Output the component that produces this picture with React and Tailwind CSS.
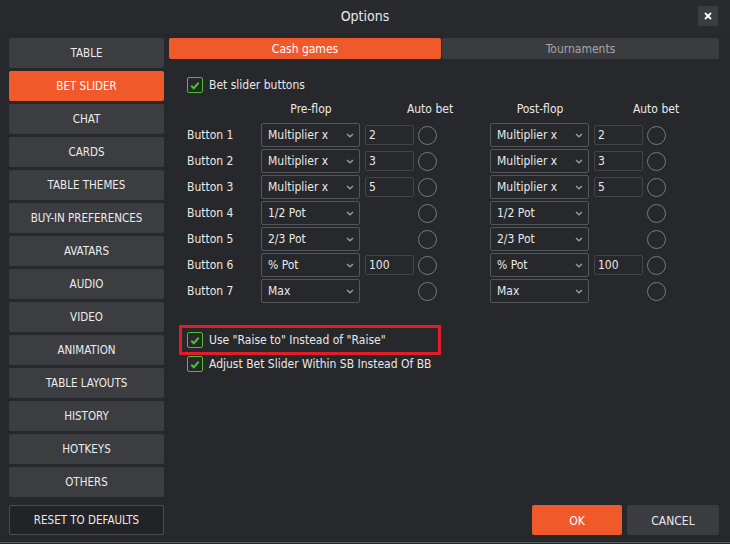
import { useState } from "react";

const MENU = [
  "TABLE",
  "BET SLIDER",
  "CHAT",
  "CARDS",
  "TABLE THEMES",
  "BUY-IN PREFERENCES",
  "AVATARS",
  "AUDIO",
  "VIDEO",
  "ANIMATION",
  "TABLE LAYOUTS",
  "HISTORY",
  "HOTKEYS",
  "OTHERS",
];

const ROWS = [
  { label: "Button 1", type: "Multiplier x", value: "2" },
  { label: "Button 2", type: "Multiplier x", value: "3" },
  { label: "Button 3", type: "Multiplier x", value: "5" },
  { label: "Button 4", type: "1/2 Pot" },
  { label: "Button 5", type: "2/3 Pot" },
  { label: "Button 6", type: "% Pot", value: "100" },
  { label: "Button 7", type: "Max" },
];

function Check() {
  return (
    <span className="w-[16px] h-[16px] rounded-[2px] border border-[#4cbb2c] flex items-center justify-center shrink-0">
      <svg width="10" height="9" viewBox="0 0 10 9">
        <path d="M1.3 4.8 L3.8 7.2 L8.7 1.6" fill="none" stroke="#4cc42c" strokeWidth="2" />
      </svg>
    </span>
  );
}

function Select({ text }) {
  return (
    <div className="w-[99px] h-[24px] rounded-[2px] border border-[#55565a] flex items-center justify-between pl-[6px] pr-[5px] shrink-0">
      <span>{text}</span>
      <svg width="8" height="5" viewBox="0 0 8 5">
        <path d="M1 1 L4 3.8 L7 1" fill="none" stroke="#9a9b9e" strokeWidth="1.4" />
      </svg>
    </div>
  );
}

function Group({ row }) {
  return (
    <div className="flex items-center shrink-0">
      <Select text={row.type} />
      <div className="w-[54px] pl-[5px]">
        {row.value && (
          <div className="w-[49px] h-[20px] rounded-[2px] border border-[#434447] flex items-center pl-[3px]">
            {row.value}
          </div>
        )}
      </div>
      <span className="w-[19px] h-[19px] rounded-full border border-[#77787b] ml-[4px]" />
    </div>
  );
}

export default function App() {
  const [active] = useState("BET SLIDER");

  return (
    <div
      className="w-[730px] h-[544px] bg-[#27282b] text-[#e9e9ea] text-[12px] overflow-hidden flex flex-col"
      style={{ fontFamily: '"DejaVu Sans Condensed", "Noto Sans", sans-serif' }}
    >
      <div className="h-[33px] shrink-0 flex items-center justify-center relative bg-[#292a2e]">
        <span className="text-[14px]">Options</span>
        <button className="absolute right-[12px] top-[6px] w-[20px] h-[20px] rounded-[2px] bg-[#3b3c40] flex items-center justify-center">
          <svg width="8" height="8" viewBox="0 0 8 8">
            <path d="M1 1 L7 7 M7 1 L1 7" stroke="#fff" strokeWidth="1.8" />
          </svg>
        </button>
      </div>

      <div className="flex flex-1 pl-[9px] pr-[11px] pt-[5px] pb-[7px] gap-[5px]">
        <div className="w-[155px] shrink-0 flex flex-col gap-[3px]">
          {MENU.map((m) => (
            <div
              key={m}
              className={
                "h-[30px] pt-[2px] rounded-[2px] flex items-center justify-center text-[11.5px] " +
                (m === active ? "bg-[#f05a2b] text-white" : "bg-[#3c3d41] text-[#ececec]")
              }
            >
              {m}
            </div>
          ))}
          <div className="mt-[5px] h-[30px] pt-[2px] rounded-[2px] border border-[#4a4b4f] bg-[#222326] flex items-center justify-center text-[11.5px]">
            RESET TO DEFAULTS
          </div>
        </div>

        <div className="flex-1 flex flex-col">
          <div className="flex h-[21px] gap-[1px]">
            <div className="w-[272px] rounded-[2px] bg-[#f05a2b] text-white flex items-center justify-center">
              Cash games
            </div>
            <div className="flex-1 rounded-[2px] bg-[#3b3c40] text-[#a6a7aa] flex items-center justify-center">
              Tournaments
            </div>
          </div>

          <div className="pl-[18px] pt-[18px] flex-1 flex flex-col">
            <div className="flex items-center gap-[6px] h-[16px]">
              <Check />
              <span>Bet slider buttons</span>
            </div>

            <div className="flex h-[14px] mt-[9px] items-center">
              <span className="w-[74px] shrink-0" />
              <span className="w-[100px] shrink-0 text-center">Pre-flop</span>
              <span className="w-[39px] shrink-0" />
              <span className="w-[60px] shrink-0 text-center">Auto bet</span>
              <span className="w-[30px] shrink-0" />
              <span className="w-[100px] shrink-0 text-center">Post-flop</span>
              <span className="w-[36px] shrink-0" />
              <span className="w-[60px] shrink-0 text-center">Auto bet</span>
            </div>

            <div className="flex flex-col gap-[2px] mt-[7px]">
              {ROWS.map((r) => (
                <div key={r.label} className="flex items-center h-[24px]">
                  <span className="w-[74px] shrink-0">{r.label}</span>
                  <Group row={r} />
                  <span className="w-[53px] shrink-0" />
                  <Group row={r} />
                </div>
              ))}
            </div>

            <div className="mt-[22px] -ml-[8px] w-[262px] h-[30px] border-[3px] border-[#e11d2a] flex items-center pl-[5px] gap-[6px]">
              <Check />
              <span>Use "Raise to" Instead of "Raise"</span>
            </div>
            <div className="flex items-center gap-[6px] h-[16px] mt-[1px]">
              <Check />
              <span>Adjust Bet Slider Within SB Instead Of BB</span>
            </div>

            <div className="mt-auto flex justify-end gap-[5px]">
              <div className="w-[90px] h-[30px] pt-[2px] rounded-[2px] bg-[#f05a2b] text-white flex items-center justify-center">
                OK
              </div>
              <div className="w-[92px] h-[30px] pt-[2px] rounded-[2px] bg-[#3b3c40] flex items-center justify-center">
                CANCEL
              </div>
            </div>
          </div>
        </div>
      </div>
      <div className="h-[1px] shrink-0 bg-[#5d5e61] mb-[1px]" />
    </div>
  );
}
